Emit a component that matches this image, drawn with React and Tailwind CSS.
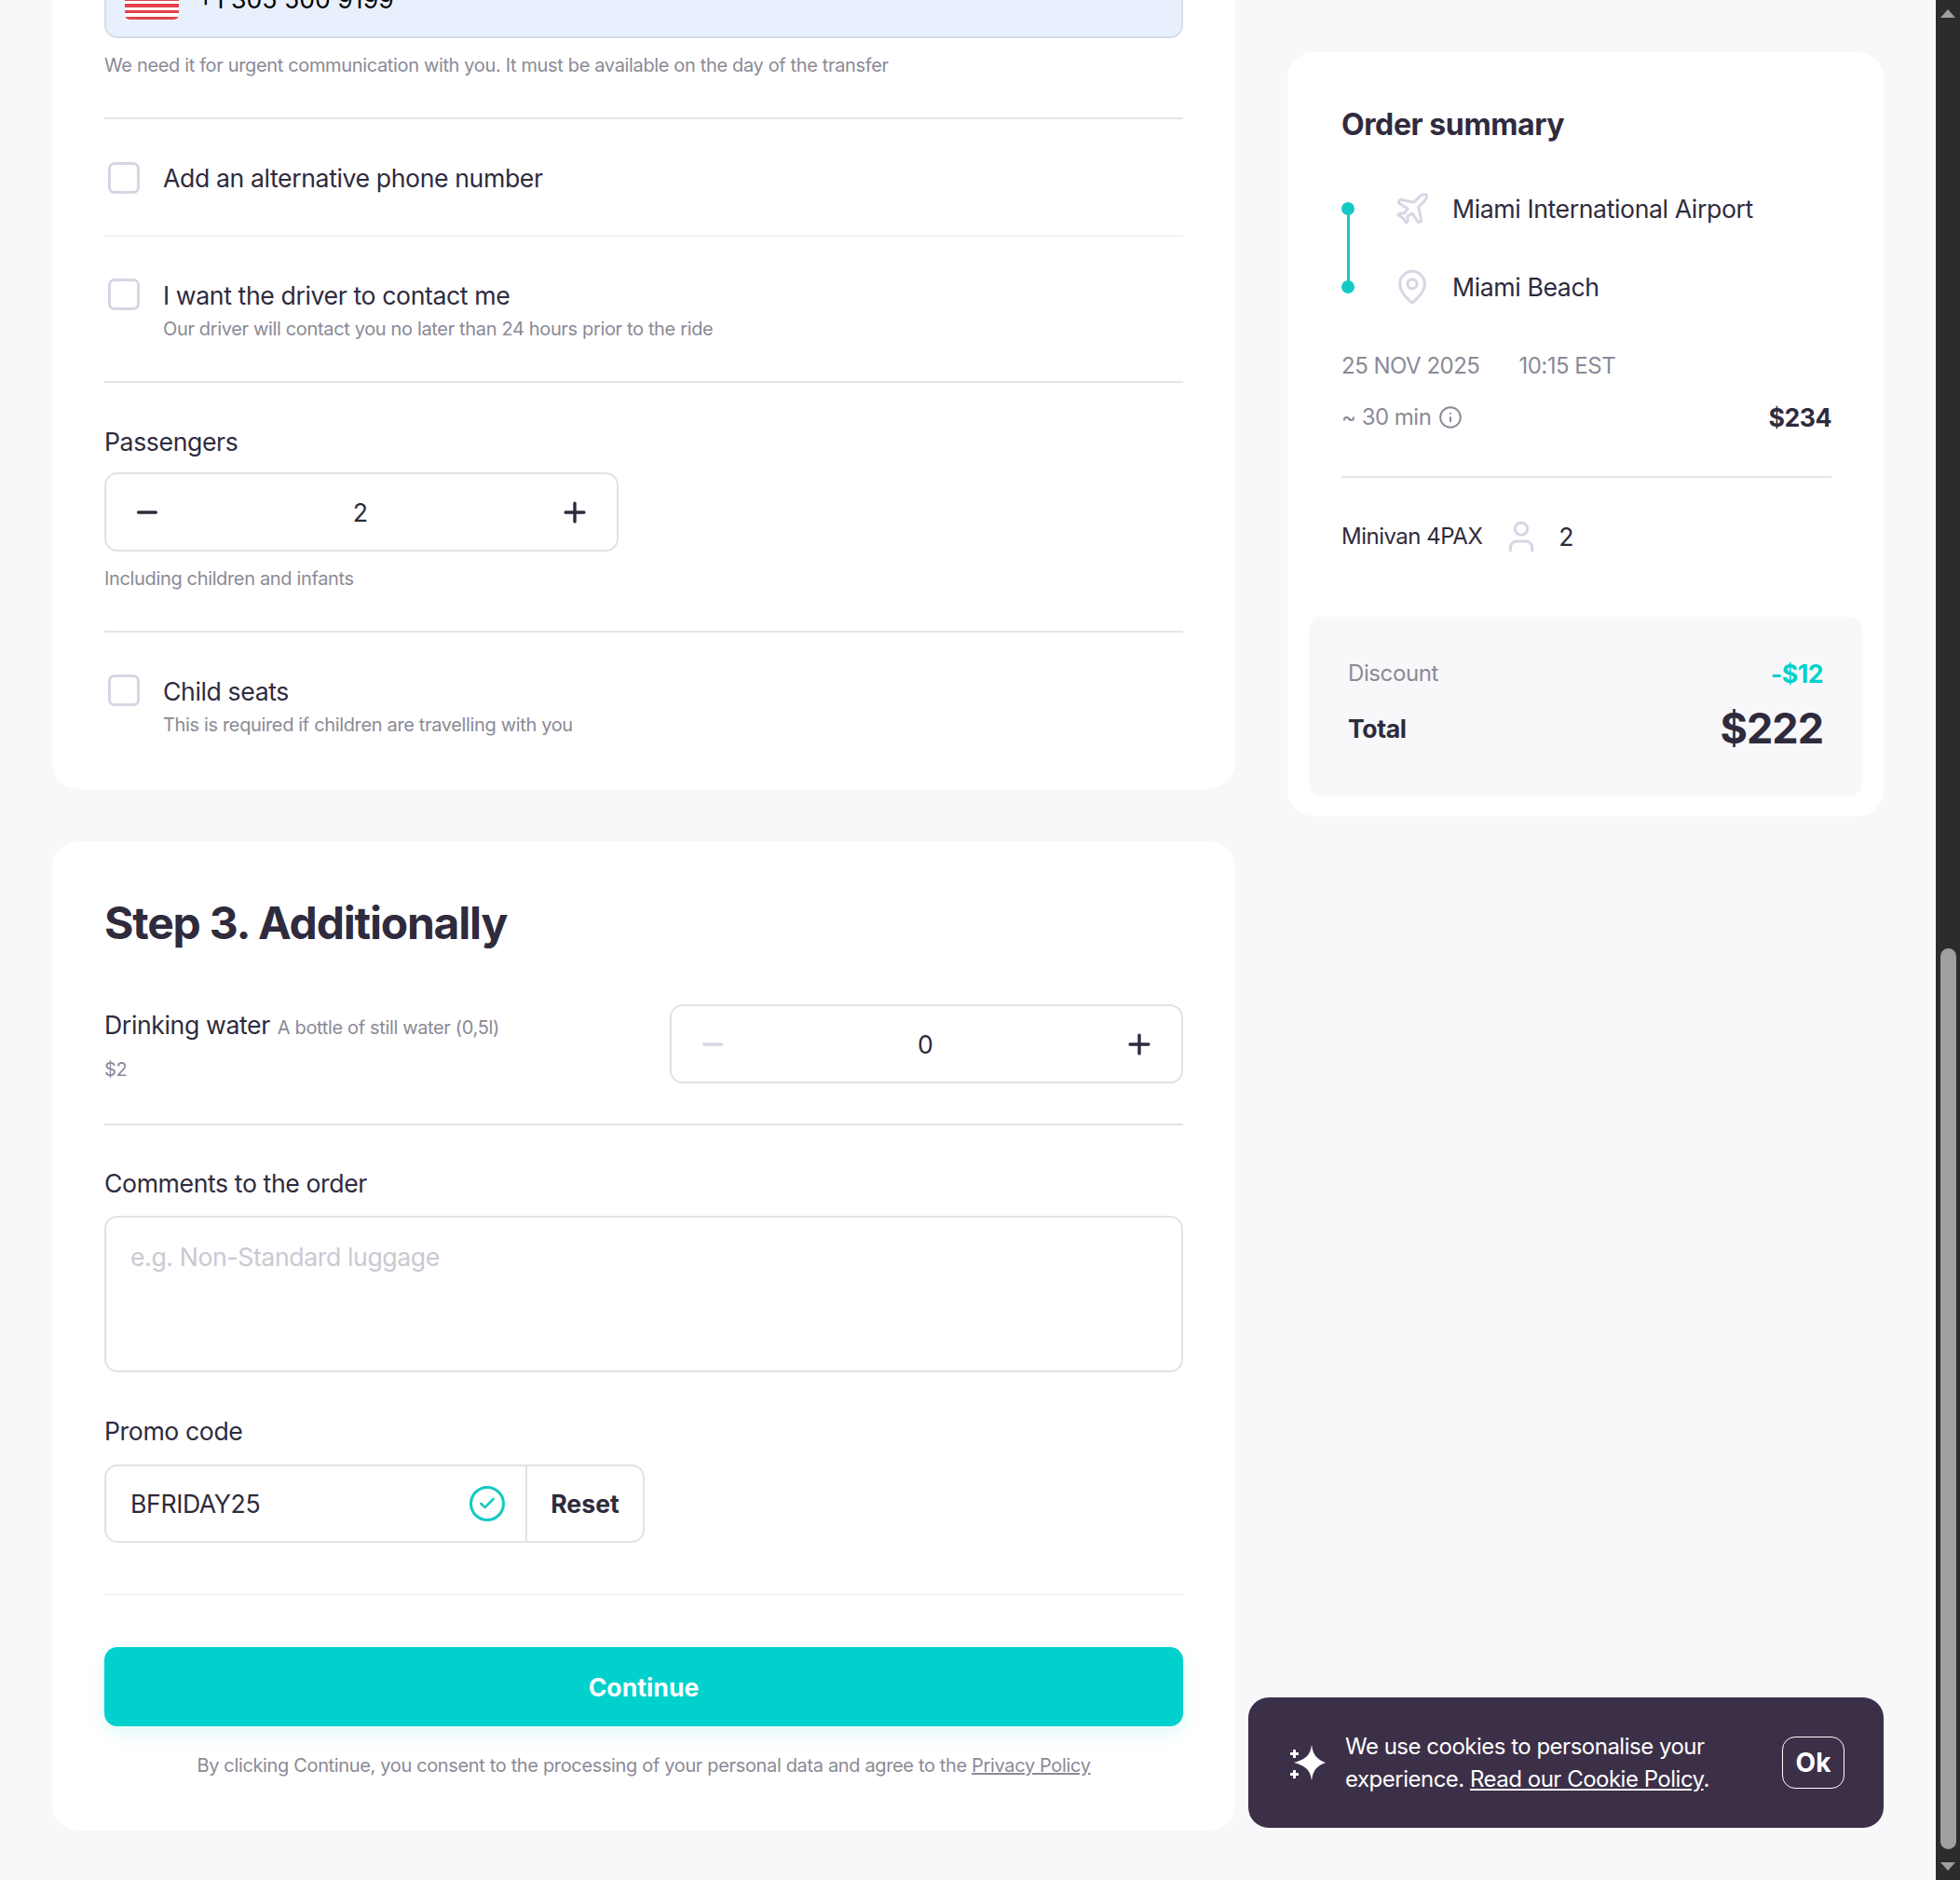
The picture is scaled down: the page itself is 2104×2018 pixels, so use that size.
import { Plane, MapPin, User, Info, Minus, Plus, Check } from 'lucide-react';

const Divider = ({ thin }) => (
  <div className={thin ? 'h-px bg-[#e9e9ee]' : 'h-[2px] bg-[#e4e4ea]'} />
);

const Hint = ({ children, className = '' }) => (
  <p className={`text-[20px] leading-[28px] tracking-[-0.35px] text-[#8b8a96] ${className}`}>{children}</p>
);

const Label = ({ children, className = '' }) => (
  <p className={`text-[26.67px] leading-[36px] tracking-[-0.4px] text-[#2f2b3d] ${className}`}>{children}</p>
);

const Box = () => (
  <span className="ml-1 mt-0 h-[34px] w-[34px] shrink-0 rounded-[7px] border-[3px] border-[#d6d6e4] bg-white" />
);

function Stepper({ value, muted }) {
  return (
    <div className="flex h-[85px] items-center justify-between rounded-[14px] border-2 border-[#e2e2e8] bg-white px-7">
      <Minus size={32} strokeWidth={2.6} className={muted ? 'text-[#d6d6e4]' : 'text-[#2f2b3d]'} />
      <span className="text-[26.67px] text-[#2f2b3d]">{value}</span>
      <Plus size={34} strokeWidth={2.4} className="text-[#2f2b3d]" />
    </div>
  );
}

function Sparkle() {
  return (
    <svg width="40" height="38" viewBox="0 0 40 38" fill="white" className="shrink-0">
      <path d="M24 0 C25.5 10 28.5 15 39 19 C28.5 23 25.5 28 24 38 C22.5 28 19.5 23 5 19 C19.5 15 22.5 10 24 0 Z" />
      <path d="M4 5 h3 v3 h3 v3 h-3 v3 h-3 v-3 h-3 v-3 h3 Z" />
      <path d="M4 27 h3 v3 h3 v3 h-3 v3 h-3 v-3 h-3 v-3 h3 Z" />
    </svg>
  );
}

export default function App() {
  return (
    <div className="relative flex h-[2018px] overflow-hidden bg-[#f8f8fa] [font-family:Inter,sans-serif]">
      <div className="flex flex-1 items-start gap-14 pl-14">
        <div className="flex w-[1270px] flex-col gap-14 -mt-[60px]">
          {/* Step 2, scrolled off at the top */}
          <section className="rounded-[28px] bg-white px-14 pt-[17px] pb-[55px]">
            <div className="flex h-[84px] items-center gap-5 rounded-[14px] border-2 border-[#d8dde8] bg-[#e8f0fe] px-5">
              <div className="flex h-[44px] w-[58px] flex-col justify-between overflow-hidden rounded-[5px] bg-white">
                {Array.from({ length: 7 }).map((_, i) => (
                  <span key={i} className="h-[3.5px] bg-[#e2434b]" />
                ))}
              </div>
              <span className="text-[26.67px] text-black">+1 305 500 9199</span>
            </div>
            <Hint className="mt-[15px] mb-[42px]">We need it for urgent communication with you. It must be available on the day of the transfer</Hint>
            <Divider />
            <div className="flex h-[125px] items-center gap-[25px]">
              <Box />
              <Label>Add an alternative phone number</Label>
            </div>
            <Divider thin />
            <div className="flex items-start gap-[25px] pt-[45px] pb-[42px]">
              <Box />
              <div>
                <Label>I want the driver to contact me</Label>
                <Hint className="mt-1">Our driver will contact you no later than 24 hours prior to the ride</Hint>
              </div>
            </div>
            <Divider />
            <Label className="mt-[45px]">Passengers</Label>
            <div className="mt-[15px] w-[552px]">
              <Stepper value={2} />
            </div>
            <Hint className="mt-[15px] mb-[42px]">Including children and infants</Hint>
            <Divider />
            <div className="flex items-start gap-[25px] pt-[45px]">
              <Box />
              <div>
                <Label>Child seats</Label>
                <Hint className="mt-1">This is required if children are travelling with you</Hint>
              </div>
            </div>
          </section>

          {/* Step 3 */}
          <section className="rounded-[28px] bg-white px-14 pt-[59px] pb-14">
            <h2 className="text-[48px] leading-[58px] font-bold tracking-[-1.2px] text-[#2f2b3d]">Step 3. Additionally</h2>
            <div className="mt-[58px] grid grid-cols-2 gap-14 pb-[43px]">
              <div className="pt-1">
                <div className="flex items-baseline gap-2">
                  <Label>Drinking water</Label>
                  <Hint>A bottle of still water (0,5l)</Hint>
                </div>
                <Hint className="mt-4">$2</Hint>
              </div>
              <Stepper value={0} muted />
            </div>
            <Divider />
            <Label className="mt-[44px]">Comments to the order</Label>
            <div className="mt-[17px] h-[168px] rounded-[14px] border-2 border-[#e2e2e8] px-[26px] py-[24px] text-[26.67px] leading-[36px] tracking-[-0.4px] text-[#c9c9d2]">
              e.g. Non-Standard luggage
            </div>
            <Label className="mt-[45px]">Promo code</Label>
            <div className="mt-[18px] mb-[55px] flex h-[84px] w-[580px] rounded-[14px] border-2 border-[#e2e2e8]">
              <div className="flex flex-1 items-center justify-between border-r-2 border-[#e2e2e8] pr-[22px] pl-[26px]">
                <span className="text-[26.67px] tracking-[-0.4px] text-[#2f2b3d]">BFRIDAY25</span>
                <span className="flex h-[38px] w-[38px] items-center justify-center rounded-full border-[3px] border-[#14c9c4]">
                  <Check size={20} strokeWidth={3} className="text-[#14c9c4]" />
                </span>
              </div>
              <span className="flex w-[124px] items-center justify-center text-[26.67px] font-bold text-[#2f2b3d]">Reset</span>
            </div>
            <Divider thin />
            <button className="mt-14 flex h-[85px] w-full items-center justify-center rounded-[14px] bg-[#00d1cd] text-[26.67px] font-bold text-white shadow-[0_8px_20px_rgba(0,209,205,0.12)]">
              Continue
            </button>
            <Hint className="mt-7 text-center">
              By clicking Continue, you consent to the processing of your personal data and agree to the <span className="underline">Privacy Policy</span>
            </Hint>
          </section>
        </div>

        {/* Order summary */}
        <aside className="mt-14 w-[640px] rounded-[28px] bg-white pt-[57px] pb-[21px]">
          <div className="pr-14 pl-[58px]">
            <h3 className="text-[32px] leading-[42px] font-bold tracking-[-0.4px] text-[#2f2b3d]">Order summary</h3>
            <div className="mt-[27px] flex gap-[42px]">
              <div className="flex flex-col items-center py-[35px]">
                <span className="h-[14px] w-[14px] rounded-full bg-[#14c9c4]" />
                <span className="-my-[2px] w-[3px] flex-1 bg-[#14c9c4]" />
                <span className="h-[14px] w-[14px] rounded-full bg-[#14c9c4]" />
              </div>
              <div className="flex flex-col">
                <div className="flex h-[84px] items-center gap-[23px]">
                  <Plane size={40} strokeWidth={1.8} className="text-[#d6d6e4]" />
                  <Label>Miami International Airport</Label>
                </div>
                <div className="flex h-[84px] items-center gap-[23px]">
                  <MapPin size={40} strokeWidth={1.8} className="text-[#d6d6e4]" />
                  <Label>Miami Beach</Label>
                </div>
              </div>
            </div>
            <div className="mt-[26px] flex gap-[42px] text-[24px] leading-[34px] tracking-[-0.5px] text-[#8b8a96]">
              <span>25 NOV 2025</span>
              <span>10:15 EST</span>
            </div>
            <div className="mt-[21px] flex items-center justify-between pb-[46px]">
              <span className="flex items-center gap-2 text-[24px] leading-[34px] tracking-[-0.5px] text-[#8b8a96]">
                ~ 30 min <Info size={26} strokeWidth={1.8} />
              </span>
              <span className="text-[26.67px] leading-[34px] font-bold tracking-[-0.5px] text-[#2f2b3d]">$234</span>
            </div>
            <Divider />
            <div className="mt-[45px] flex h-[36px] items-center">
              <span className="text-[24px] tracking-[-0.5px] text-[#2f2b3d]">Minivan 4PAX</span>
              <User size={40} strokeWidth={1.8} className="ml-[22px] text-[#d6d6e4]" />
              <span className="ml-[20px] text-[26.67px] text-[#2f2b3d]">2</span>
            </div>
          </div>
          <div className="mx-[23px] mt-[68px] h-[193px] rounded-[14px] bg-[#f8f8fa] px-[42px] pt-[44px]">
            <div className="flex h-[34px] items-center justify-between">
              <span className="text-[24px] tracking-[-0.4px] text-[#8b8a96]">Discount</span>
              <span className="text-[26.67px] font-bold tracking-[-0.5px] text-[#00d1cd]">-$12</span>
            </div>
            <div className="mt-4 flex h-[52px] items-center justify-between">
              <span className="text-[26.67px] font-bold tracking-[-0.4px] text-[#2f2b3d]">Total</span>
              <span className="text-[45px] font-bold tracking-[-1px] text-[#2f2b3d]">$222</span>
            </div>
          </div>
        </aside>
      </div>

      {/* Cookie notice floats over the page */}
      <div className="absolute top-[1822px] left-[1340px] flex h-[140px] w-[682px] items-center rounded-[22px] bg-[#3c3049] pr-[42px] pl-[44px]">
        <Sparkle />
        <p className="ml-[20px] flex-1 text-[24px] leading-[35px] tracking-[-0.5px] text-white">
          We use cookies to personalise your<br />experience. <span className="underline">Read our Cookie Policy</span>.
        </p>
        <span className="flex h-[56px] w-[67px] items-center justify-center rounded-[14px] border border-white text-[28px] font-bold text-white">Ok</span>
      </div>

      {/* Browser scrollbar */}
      <div className="flex w-[26px] shrink-0 flex-col items-center bg-[#2c2c2c] pt-[10px] pb-[10px]">
        <span className="h-0 w-0 border-x-[8px] border-b-[9px] border-x-transparent border-b-[#9f9f9f]" />
        <span className="mt-[999px] h-[967px] w-[17px] rounded-full bg-[#9f9f9f]" />
        <span className="mt-auto h-0 w-0 border-x-[8px] border-t-[9px] border-x-transparent border-t-[#9f9f9f]" />
      </div>
    </div>
  );
}
